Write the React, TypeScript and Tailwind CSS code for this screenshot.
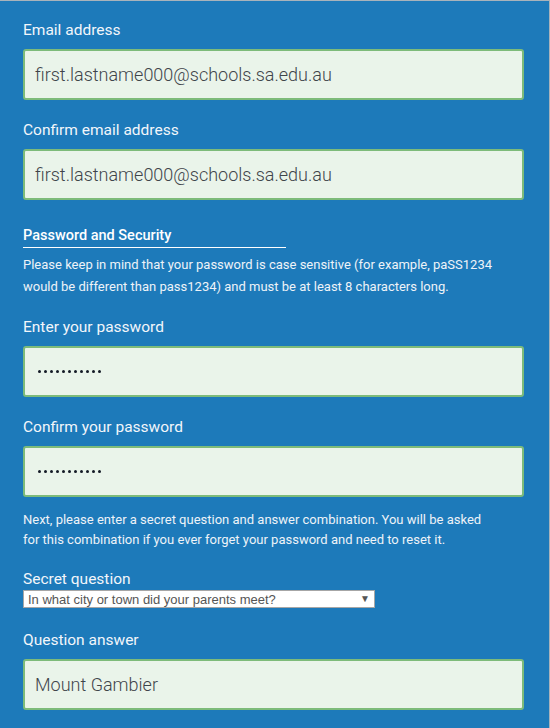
const FONT = "font-['Roboto','Liberation_Sans',sans-serif]";

function Label({ children, className = "" }: { children: React.ReactNode; className?: string }) {
  return (
    <div className={`pt-[2px] text-[15.5px] leading-6 text-[#f2f6fa] ${className}`}>{children}</div>
  );
}

function Field({ value, password }: { value: string; password?: boolean }) {
  return (
    <div className="flex h-[51px] w-[501px] items-center rounded-[3px] border-2 border-[#7dbb7a] bg-[#eaf4ea] px-[10px]">
      {password ? (
        <div className="flex gap-[3px] pl-[3px]">
          {Array.from({ length: value.length }).map((_, i) => (
            <span key={i} className="h-[3px] w-[3px] rounded-full bg-[#141a26]" />
          ))}
        </div>
      ) : (
        <span className="text-[18px] font-light text-[#3f454a]">{value}</span>
      )}
    </div>
  );
}

export default function App() {
  return (
    <div
      className={`${FONT} h-[728px] w-[550px] overflow-hidden border-t border-r border-[#a9b3bb] bg-[#1d7aba] pl-[23px] pt-[15px]`}
    >
      <Label className="mb-[7px]">Email address</Label>
      <Field value="first.lastname000@schools.sa.edu.au" />

      <Label className="mb-[7px] mt-[16px]">Confirm email address</Label>
      <Field value="first.lastname000@schools.sa.edu.au" />

      <div className="mt-[25px] w-[263px] border-b border-white pb-[1px] pt-[1px] text-[14.5px] font-medium leading-5 text-white">
        Password and Security
      </div>
      <p className="mt-[6px] text-[13px] leading-[22px] text-[#eef3f8]">
        Please keep in mind that your password is case sensitive (for example, paSS1234
        <br />
        would be different than pass1234) and must be at least 8 characters long.
      </p>

      <Label className="mb-[7px] mt-[15px]">Enter your password</Label>
      <Field value="•••••••••••" password />

      <Label className="mb-[7px] mt-[16px]">Confirm your password</Label>
      <Field value="•••••••••••" password />

      <p className="mt-[13px] text-[13px] leading-5 text-[#eef3f8]">
        Next, please enter a secret question and answer combination. You will be asked
        <br />
        for this combination if you ever forget your password and need to reset it.
      </p>

      <Label className="mt-[15px] -mb-[1px]">Secret question</Label>
      <div className="flex h-[18px] w-[352px] items-center justify-between border border-[#a6a6a6] bg-white pl-[4px] pr-[4px] font-['Liberation_Sans',Arial,sans-serif] text-[13px] text-[#555]">
        <span className="leading-none">In what city or town did your parents meet?</span>
        <span className="text-[10px] leading-none text-[#555]">▼</span>
      </div>

      <Label className="mb-[7px] mt-[18px]">Question answer</Label>
      <Field value="Mount Gambier" />
    </div>
  );
}
